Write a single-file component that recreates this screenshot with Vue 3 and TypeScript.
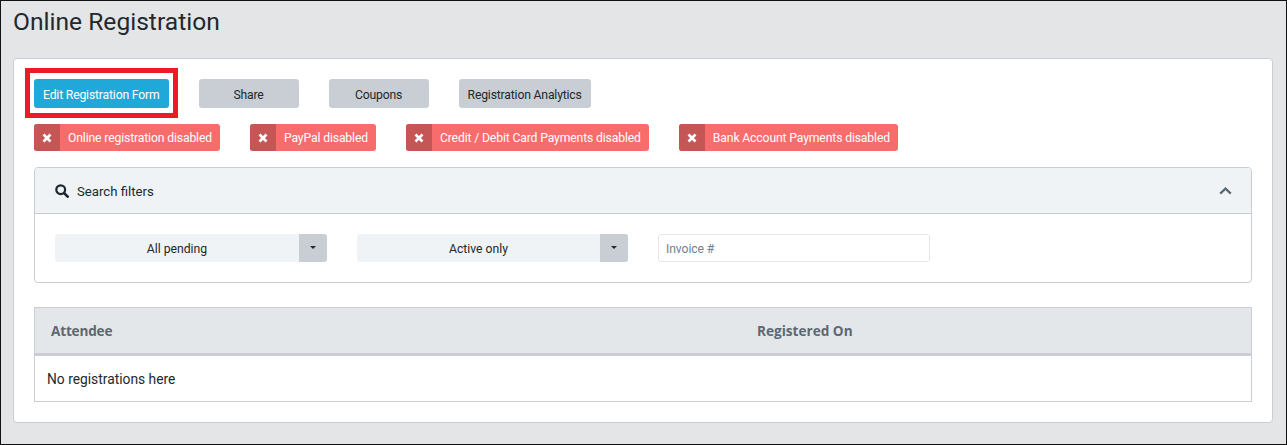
<script setup lang="ts">
const actions = [
  { label: 'Edit Registration Form', primary: true },
  { label: 'Share', primary: false },
  { label: 'Coupons', primary: false },
  { label: 'Registration Analytics', primary: false },
]
const statuses = [
  'Online registration disabled',
  'PayPal disabled',
  'Credit / Debit Card Payments disabled',
  'Bank Account Payments disabled',
]
const selects = ['All pending', 'Active only']
</script>

<template>
  <div class="frame">
    <h1 class="title">Online Registration</h1>
    <section class="card">
      <div class="actions">
        <button v-for="a in actions" :key="a.label" class="btn" :class="{ primary: a.primary }">
          {{ a.label }}
          <span v-if="a.primary" class="highlight"></span>
        </button>
      </div>
      <div class="statuses">
        <span v-for="s in statuses" :key="s" class="status">
          <span class="status-icon">
            <svg width="10" height="10" viewBox="0 0 10 10">
              <path d="M1.5 1.5 8.5 8.5M8.5 1.5 1.5 8.5" stroke="#fff" stroke-width="2.6" fill="none" />
            </svg>
          </span>
          <span class="status-text">{{ s }}</span>
        </span>
      </div>
      <div class="panel">
        <div class="panel-head">
          <span class="panel-title">
            <svg class="search" width="14" height="14" viewBox="0 0 14 14">
              <circle cx="5.7" cy="5.7" r="4.4" stroke="#1d2731" stroke-width="2.2" fill="none" />
              <path d="M9 9 12.7 12.7" stroke="#1d2731" stroke-width="2.6" stroke-linecap="round" />
            </svg>
            <span class="panel-label">Search filters</span>
          </span>
          <svg width="13" height="8" viewBox="0 0 13 8">
            <path d="M1.2 6.6 6.5 1.6 11.8 6.6" stroke="#5c6873" stroke-width="2.2" fill="none" />
          </svg>
        </div>
        <div class="panel-body">
          <div v-for="s in selects" :key="s" class="select">
            <span class="select-value">{{ s }}</span>
            <span class="select-caret"></span>
          </div>
          <input class="invoice" placeholder="Invoice #" />
        </div>
      </div>
      <div class="table">
        <div class="table-head">
          <span class="col-a">Attendee</span>
          <span>Registered On</span>
        </div>
        <div class="table-row">No registrations here</div>
      </div>
    </section>
  </div>
</template>

<style>
html, body { margin: 0; padding: 0; }
</style>

<style scoped>
.frame {
  box-sizing: border-box;
  width: 1287px;
  height: 445px;
  border: 1px solid #111;
  background: #e4e5e7;
  padding: 0 13px 0 12px;
  font-family: Roboto, "Open Sans", sans-serif;
  font-size: 12.2px;
  letter-spacing: -0.17px;
  color: #23282c;
  overflow: hidden;
}
.title {
  margin: 0;
  height: 57px;
  padding-top: 5px;
  box-sizing: border-box;
  font-size: 24.6px;
  letter-spacing: 0;
  line-height: 32px;
  font-weight: 400;
}
.card {
  box-sizing: border-box;
  height: 365px;
  background: #fff;
  border: 1px solid #c8ced3;
  border-radius: 4px;
  padding: 20px 20px 0;
}
.actions {
  display: flex;
  gap: 30px;
}
.btn {
  position: relative;
  height: 29px;
  min-width: 100px;
  padding: 2px 9px 0;
  border: 0;
  border-radius: 3px;
  background: #c8ced3;
  color: #23282c;
  font: inherit;
  letter-spacing: inherit;
}
.btn.primary {
  background: #20a8d8;
  color: #fff;
}
.highlight {
  position: absolute;
  left: -9px;
  top: -11px;
  width: 153px;
  height: 50px;
  box-sizing: border-box;
  border: 5px solid #ed1c24;
}
.statuses {
  display: flex;
  gap: 30px;
  margin-top: 16px;
}
.status {
  display: flex;
  height: 27px;
  background: #f86c6b;
  border-radius: 3px;
  color: #fff;
  letter-spacing: -0.14px;
  overflow: hidden;
}
.status-icon {
  width: 26px;
  display: flex;
  align-items: center;
  justify-content: center;
  background: #c65656;
}
.status-text {
  padding: 0 8px;
  line-height: 28px;
  white-space: nowrap;
}
.panel {
  margin-top: 16px;
  height: 116px;
  box-sizing: border-box;
  border: 1px solid #c8ced3;
  border-radius: 4px;
  overflow: hidden;
}
.panel-head {
  height: 46px;
  box-sizing: border-box;
  background: #f0f3f5;
  border-bottom: 1px solid #c8ced3;
  display: flex;
  align-items: center;
  justify-content: space-between;
  padding: 0 19px 0 20px;
}
.panel-title {
  display: flex;
  align-items: center;
  gap: 8px;
  font-size: 13.2px;
  letter-spacing: 0;
}
.panel-label {
  padding-top: 1px;
}
.panel-body {
  display: flex;
  gap: 30px;
  padding: 20px;
}
.select {
  width: 272px;
  height: 28px;
  display: flex;
  background: #f0f3f5;
  border-radius: 3px;
  overflow: hidden;
}
.select + .select { width: 271px; }
.select-value {
  flex: 1;
  text-align: center;
  line-height: 30px;
  letter-spacing: 0;
}
.select-caret {
  width: 28px;
  background: #c8ced3;
  position: relative;
}
.select-caret::after {
  content: "";
  position: absolute;
  left: 11px;
  top: 12px;
  border-left: 3.5px solid transparent;
  border-right: 3.5px solid transparent;
  border-top: 3.5px solid #23282c;
}
.invoice {
  box-sizing: border-box;
  width: 272px;
  height: 28px;
  border: 1px solid #e4e7ea;
  border-radius: 3px;
  padding: 1px 7px 0;
  font: inherit;
  letter-spacing: -0.1px;
  outline: none;
}
.invoice::placeholder {
  color: #73818f;
  opacity: 1;
}
.table {
  margin-top: 24px;
  width: 1218px;
  box-sizing: border-box;
  border: 1px solid #c8ced3;
}
.table-head {
  height: 48px;
  box-sizing: border-box;
  background: #e4e7ea;
  border-bottom: 3px solid #c8ced3;
  display: flex;
  align-items: center;
  padding-left: 16px;
  font-family: "Open Sans", sans-serif;
  font-size: 13.6px;
  letter-spacing: 0;
  font-weight: 700;
  color: #5c6873;
}
.col-a {
  width: 706px;
  letter-spacing: -0.2px;
}
.table-row {
  height: 45px;
  line-height: 47px;
  padding-left: 12px;
  font-size: 13.8px;
  letter-spacing: 0;
}
</style>
